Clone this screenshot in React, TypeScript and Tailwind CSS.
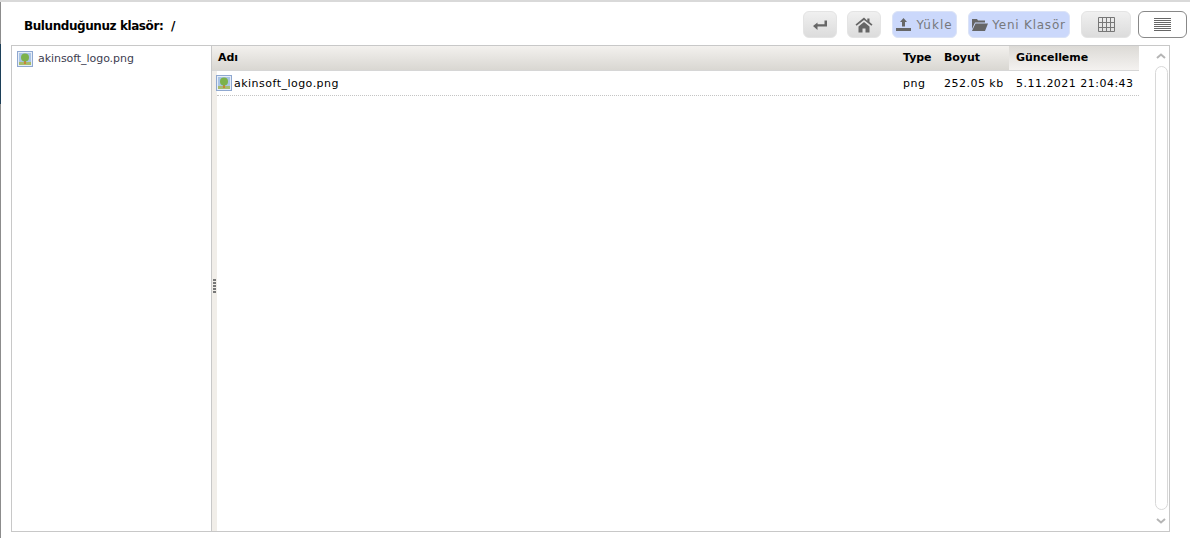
import React from 'react';

const ImageIcon = () => (
    <svg width="16" height="16" viewBox="0 0 16 16" className="shrink-0">
        <rect x="0.5" y="0.5" width="15" height="15" fill="#e6edf8" stroke="#8fa8d0" />
        <rect x="2" y="2" width="12" height="12" fill="#a9c4e4" />
        <rect x="2" y="11" width="12" height="3" fill="#a6bc6a" />
        <rect x="7" y="9" width="2" height="4" fill="#c8823c" />
        <circle cx="8" cy="6.500" r="4" fill="#7cb24a" />
    </svg>
);

const ToolButton: React.FC<{ className?: string; children: React.ReactNode }> = ({ className, children }) => (
    <div className={`h-[27px] flex items-center justify-center rounded-[6px] border ${className}`}>{children}</div>
);

const grayBtn = 'border-[#e4e4e4] bg-gradient-to-b from-[#f0f0f0] to-[#dcdcdc]';
const blueBtn = 'border-[#dbe3f7] bg-[#cbd8fb] gap-1 text-[#77787c] text-[12px]';

export default function App() {
    return (
        <div className="relative w-[1190px] h-[538px] bg-white border-t-2 border-[#d9d9d9] overflow-hidden font-['DejaVu_Sans',sans-serif] text-[11px] text-black">
            {/* edge of the page behind the frame */}
            <div className="absolute left-0 -top-[2px] w-px h-[538px] bg-[#8c8c8c]" />
            <div className="absolute left-0 top-[42px] w-px h-[60px] bg-[#1c3f58]" />
            <div className="h-[43px] flex items-start">
                <div className="ml-6 mt-[16px] text-[12px] leading-[17px] font-bold tracking-[-0.42px]">
                    Bulunduğunuz klasör: <span className="ml-[4px]">/</span>
                </div>
                <div className="ml-auto mt-[9px] mr-[3px] flex gap-[10px]">
                    <ToolButton className={`w-[34px] ${grayBtn}`}>
                        <svg width="16" height="12" viewBox="0 0 16 12" fill="#666">
                            <path d="M12.500 1.500h2.500v6H5.500V11L1 7l4.500-3.500v1.800h7z" />
                        </svg>
                    </ToolButton>
                    <ToolButton className={`w-[34px] ${grayBtn}`}>
                        <svg width="18" height="16" viewBox="0 0 18 16" fill="#666">
                            <path d="M9 0.500L0.500 7.500l1.100 1.300L9 2.900l7.400 5.900 1.100-1.300-3-2.500V1.500h-2.200v2.200z" />
                            <path d="M3.500 9.500L9 5l5.500 4.500V15.500h-4v-4h-3v4h-4z" />
                        </svg>
                    </ToolButton>
                    <ToolButton className={`w-[65px] ml-[1px] ${blueBtn}`}>
                        <svg width="15" height="15" viewBox="0 0 15 15" fill="#666">
                            <path d="M7.500 1l3.500 4H9v4.500H6V5H4z" />
                            <path d="M0 11h15v3H0z" />
                        </svg>
                        <span className="ml-[1px] tracking-[1px]">Yükle</span>
                    </ToolButton>
                    <ToolButton className={`w-[102px] ml-[1px] ${blueBtn}`}>
                        <svg width="16" height="13" viewBox="0 0 16 13" fill="#666">
                            <path d="M0 1h5l1 1.500h7V4.500H3L0 11z" />
                            <path d="M3.500 5.500H16l-3 7.500H0z" />
                        </svg>
                        <span className="tracking-[0.77px]">Yeni Klasör</span>
                    </ToolButton>
                    <ToolButton className={`w-[50px] ml-[1px] ${grayBtn}`}>
                        <svg width="17" height="15" viewBox="0 0 17 15" fill="none" stroke="#777">
                            <path d="M.5.500h16v14H.5zM.5 5.500h16M.5 10.500h16M4.500.500v14M8.500.500v14M12.500.500v14" />
                        </svg>
                    </ToolButton>
                    <ToolButton className="w-[49px] -ml-[3px] border-[#888] bg-white">
                        <svg width="17" height="13" viewBox="0 0 17 13" fill="none" stroke="#666">
                            <path d="M0 .500h17M0 2.500h17M0 4.500h17M0 6.500h17M0 8.500h17M0 10.500h17M0 12.500h17" />
                        </svg>
                    </ToolButton>
                </div>
            </div>

            <div className="ml-[11px] w-[1159px] h-[487px] border border-[#c8c8c8] flex">
                {/* tree */}
                <div className="w-[199px] shrink-0 pt-[4px] pl-[5px]">
                    <div className="flex items-center gap-[5px] text-[11px] tracking-[-0.06px] text-[#3d3d50]">
                        <ImageIcon />
                        <span className="mt-[1px]">akinsoft_logo.png</span>
                    </div>
                </div>

                {/* list */}
                <div className="flex-1 flex min-w-0 border-l border-[#c8c8c8]">
                    <div className="w-[927px] shrink-0 flex flex-col">
                        <div className="h-[25px] flex items-center font-bold text-[11px] tracking-[-0.05px] bg-gradient-to-b from-[#f3f1ee] to-[#d9d7d2] border-b border-[#d6d6d6]">
                            <div className="w-[691px] pl-[6px] mt-[1px]">Adı</div>
                            <div className="w-[41px] mt-[1px]">Type</div>
                            <div className="w-[65px] mt-[1px]">Boyut</div>
                            <div className="flex-1 h-full flex items-center pl-[7px] pt-[1px] bg-gradient-to-b from-[#dcdad6] to-[#f4f2f0]">Güncelleme</div>
                        </div>
                        <div className="flex-1 flex">
                            <div className="w-[5px] bg-[#f1eee9] flex items-center justify-center pb-[30px]">
                                <div className="w-[3px] h-[14px] bg-[repeating-linear-gradient(to_bottom,#777_0,#777_2px,transparent_2px,transparent_3px)]" />
                            </div>
                            <div className="flex-1 h-[25px] flex items-center border-b border-dotted border-[#c4c4c4] text-[11px] tracking-[0.48px]">
                                <div className="w-[687px] flex items-center gap-[1px] -ml-[1px]">
                                    <ImageIcon />
                                    <span className="ml-[1px] mt-[2px]">akinsoft_logo.png</span>
                                </div>
                                <div className="w-[41px] mt-[2px]">png</div>
                                <div className="w-[72px] mt-[2px]">252.05 kb</div>
                                <div className="whitespace-nowrap mt-[2px]">5.11.2021 21:04:43</div>
                            </div>
                        </div>
                    </div>

                    {/* scrollbar */}
                    <div className="flex-1 flex flex-col items-center pl-[15px] pr-[1px] pt-[7px] pb-[2px]">
                        <svg width="10" height="6" viewBox="0 0 10 6" fill="none" stroke="#b5b5b5" strokeWidth="2" className="shrink-0">
                            <path d="M1 5l4-3.500L9 5" />
                        </svg>
                        <div className="w-[13px] shrink-0 h-[444px] mt-[7px] mb-[8px] rounded-full border border-[#d8d8d8]" />
                        <svg width="10" height="6" viewBox="0 0 10 6" fill="none" stroke="#b5b5b5" strokeWidth="2" className="shrink-0">
                            <path d="M1 1l4 3.500L9 1" />
                        </svg>
                    </div>
                </div>
            </div>
        </div>
    );
}
